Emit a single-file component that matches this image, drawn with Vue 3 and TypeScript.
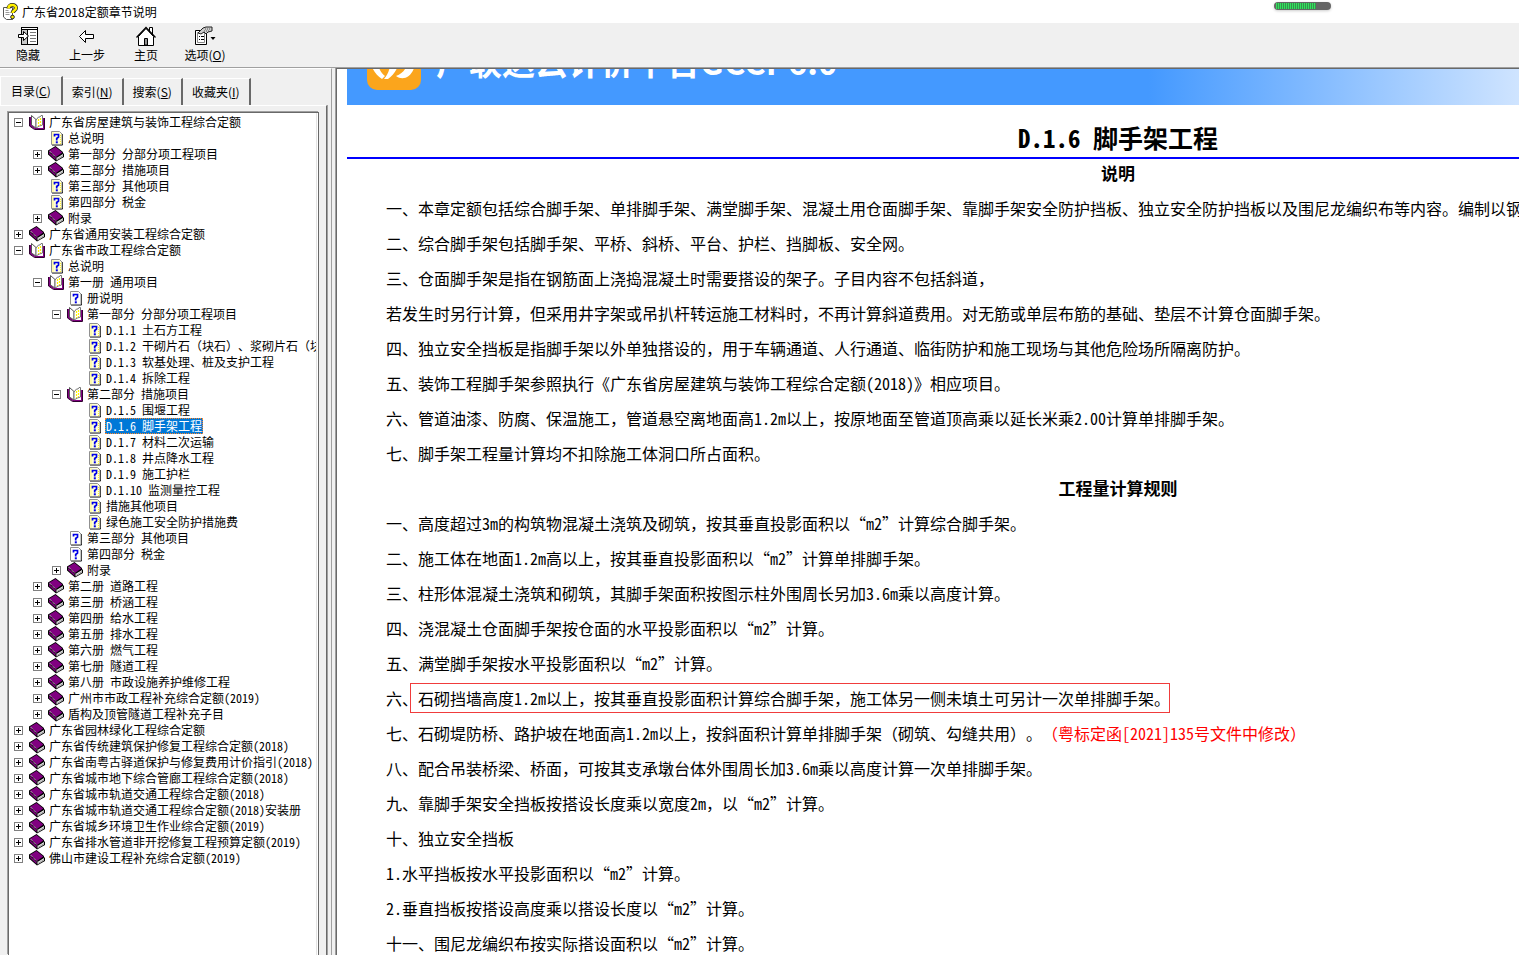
<script setup lang="ts">
import { h, ref, type FunctionalComponent } from 'vue'

type Kind = 'open' | 'book' | 'topic' | 'plain'
interface Node {
  depth: number
  kind: Kind
  label: string
}

const n = (depth: number, kind: Kind, label: string): Node => ({ depth, kind, label })

// Latin runs are set in half-width glyphs, so two of them fill one CJK cell.
const Mixed: FunctionalComponent<{ text: string }> = (props) =>
  props.text
    .split(/([\x20-\x7e]+)/)
    .filter((run) => run !== '')
    .map((run) => (/^[\x20-\x7e]/.test(run) ? h('span', { class: 'half' }, run) : run))
Mixed.props = ['text']

const nodes: Node[] = [
  n(0, 'open', '广东省房屋建筑与装饰工程综合定额'),
  n(1, 'topic', '总说明'),
  n(1, 'book', '第一部分 分部分项工程项目'),
  n(1, 'book', '第二部分 措施项目'),
  n(1, 'topic', '第三部分 其他项目'),
  n(1, 'topic', '第四部分 税金'),
  n(1, 'book', '附录'),
  n(0, 'book', '广东省通用安装工程综合定额'),
  n(0, 'open', '广东省市政工程综合定额'),
  n(1, 'topic', '总说明'),
  n(1, 'open', '第一册 通用项目'),
  n(2, 'plain', '册说明'),
  n(2, 'open', '第一部分 分部分项工程项目'),
  n(3, 'topic', 'D.1.1 土石方工程'),
  n(3, 'topic', 'D.1.2 干砌片石（块石）、浆砌片石（块'),
  n(3, 'topic', 'D.1.3 软基处理、桩及支护工程'),
  n(3, 'topic', 'D.1.4 拆除工程'),
  n(2, 'open', '第二部分 措施项目'),
  n(3, 'topic', 'D.1.5 围堰工程'),
  n(3, 'topic', 'D.1.6 脚手架工程'),
  n(3, 'topic', 'D.1.7 材料二次运输'),
  n(3, 'topic', 'D.1.8 井点降水工程'),
  n(3, 'topic', 'D.1.9 施工护栏'),
  n(3, 'topic', 'D.1.10 监测量控工程'),
  n(3, 'topic', '措施其他项目'),
  n(3, 'topic', '绿色施工安全防护措施费'),
  n(2, 'plain', '第三部分 其他项目'),
  n(2, 'plain', '第四部分 税金'),
  n(2, 'book', '附录'),
  n(1, 'book', '第二册 道路工程'),
  n(1, 'book', '第三册 桥涵工程'),
  n(1, 'book', '第四册 给水工程'),
  n(1, 'book', '第五册 排水工程'),
  n(1, 'book', '第六册 燃气工程'),
  n(1, 'book', '第七册 隧道工程'),
  n(1, 'book', '第八册 市政设施养护维修工程'),
  n(1, 'book', '广州市市政工程补充综合定额(2019)'),
  n(1, 'book', '盾构及顶管隧道工程补充子目'),
  n(0, 'book', '广东省园林绿化工程综合定额'),
  n(0, 'book', '广东省传统建筑保护修复工程综合定额(2018)'),
  n(0, 'book', '广东省南粤古驿道保护与修复费用计价指引(2018)'),
  n(0, 'book', '广东省城市地下综合管廊工程综合定额(2018)'),
  n(0, 'book', '广东省城市轨道交通工程综合定额(2018)'),
  n(0, 'book', '广东省城市轨道交通工程综合定额(2018)安装册'),
  n(0, 'book', '广东省城乡环境卫生作业综合定额(2019)'),
  n(0, 'book', '广东省排水管道非开挖修复工程预算定额(2019)'),
  n(0, 'book', '佛山市建设工程补充综合定额(2019)'),
]

const selected = ref(19)

const tabs = [
  { text: '目录', key: 'C' },
  { text: '索引', key: 'N' },
  { text: '搜索', key: 'S' },
  { text: '收藏夹', key: 'I' },
]
const activeTab = ref(0)

interface Para {
  text: string
  boxed?: string
  red?: string
}

const notes: Para[] = [
  { text: '一、本章定额包括综合脚手架、单排脚手架、满堂脚手架、混凝土用仓面脚手架、靠脚手架安全防护挡板、独立安全防护挡板以及围尼龙编织布等内容。编制以钢' },
  { text: '二、综合脚手架包括脚手架、平桥、斜桥、平台、护栏、挡脚板、安全网。' },
  { text: '三、仓面脚手架是指在钢筋面上浇捣混凝土时需要搭设的架子。子目内容不包括斜道，' },
  { text: '若发生时另行计算，但采用井字架或吊扒杆转运施工材料时，不再计算斜道费用。对无筋或单层布筋的基础、垫层不计算仓面脚手架。' },
  { text: '四、独立安全挡板是指脚手架以外单独搭设的，用于车辆通道、人行通道、临街防护和施工现场与其他危险场所隔离防护。' },
  { text: '五、装饰工程脚手架参照执行《广东省房屋建筑与装饰工程综合定额(2018)》相应项目。' },
  { text: '六、管道油漆、防腐、保温施工，管道悬空离地面高1.2m以上，按原地面至管道顶高乘以延长米乘2.00计算单排脚手架。' },
  { text: '七、脚手架工程量计算均不扣除施工体洞口所占面积。' },
]

const rules: Para[] = [
  { text: '一、高度超过3m的构筑物混凝土浇筑及砌筑，按其垂直投影面积以“m2”计算综合脚手架。' },
  { text: '二、施工体在地面1.2m高以上，按其垂直投影面积以“m2”计算单排脚手架。' },
  { text: '三、柱形体混凝土浇筑和砌筑，其脚手架面积按图示柱外围周长另加3.6m乘以高度计算。' },
  { text: '四、浇混凝土仓面脚手架按仓面的水平投影面积以“m2”计算。' },
  { text: '五、满堂脚手架按水平投影面积以“m2”计算。' },
  { text: '六、', boxed: '石砌挡墙高度1.2m以上，按其垂直投影面积计算综合脚手架，施工体另一侧未填土可另计一次单排脚手架。' },
  { text: '七、石砌堤防桥、路护坡在地面高1.2m以上，按斜面积计算单排脚手架（砌筑、勾缝共用）。', red: '（粤标定函[2021]135号文件中修改）' },
  { text: '八、配合吊装桥梁、桥面，可按其支承墩台体外围周长加3.6m乘以高度计算一次单排脚手架。' },
  { text: '九、靠脚手架安全挡板按搭设长度乘以宽度2m，以“m2”计算。' },
  { text: '十、独立安全挡板' },
  { text: '1.水平挡板按水平投影面积以“m2”计算。' },
  { text: '2.垂直挡板按搭设高度乘以搭设长度以“m2”计算。' },
  { text: '十一、围尼龙编织布按实际搭设面积以“m2”计算。' },
]
</script>

<template>
  <div class="window" lang="zh-CN">
    <header class="titlebar">
      <svg class="app-icon" viewBox="0 0 16 18" aria-hidden="true">
        <path d="M1.500 4.500h9v12H4.500L1.500 14z" fill="#fff" stroke="#555" />
        <path d="M3.500 7.500h3M3.500 9.500h4M3.500 11.500h4" stroke="#999" />
        <path d="M6.500 5.500C6.500 1 14 1 14 5c0 2.500-3.500 2.500-3.500 5" fill="none" stroke="#222" stroke-width="4" />
        <path d="M6.500 5.500C6.500 1 14 1 14 5c0 2.500-3.500 2.500-3.500 5" fill="none" stroke="#fff000" stroke-width="2.600" />
        <circle cx="10.500" cy="14" r="1.800" fill="#fff000" stroke="#222" />
      </svg>
      <span>广东省2018定额章节说明</span>
      <div class="meter" aria-hidden="true"><div class="meter-fill"></div></div>
    </header>

    <nav class="toolbar">
      <button type="button">
        <svg viewBox="0 0 22 20" shape-rendering="crispEdges" aria-hidden="true">
          <path d="M4.500 1.500h16v17h-16z" fill="#fff" stroke="#000" />
          <path d="M5 3h5v15H5z" fill="#c8c8c8" />
          <path d="M4 3.500h17M10.500 3v16" stroke="#000" />
          <path d="M13 6.500h6M13 9.500h6M13 12.500h6M13 15.500h6" stroke="#777" />
          <path d="M1.500 8.500h5v-3l5 4.500-5 4.500v-3h-5z" fill="#fff" stroke="#000" shape-rendering="auto" />
        </svg>
        <span>隐藏</span>
      </button>
      <button type="button">
        <svg viewBox="0 0 22 20" aria-hidden="true">
          <path d="M3.500 10.500l6-6v4h8v4h-8v4z" fill="#fff" stroke="#000" />
        </svg>
        <span>上一步</span>
      </button>
      <button type="button">
        <svg viewBox="0 0 22 20" aria-hidden="true">
          <path d="M14.500 1.500h3v7h-3z" fill="#fff" stroke="#000" />
          <path d="M3.500 10.500L11 2.500l7.500 8v9h-15z" fill="#fff" stroke="#000" />
          <path d="M1.500 11.500L11 1.500l9.500 10" fill="none" stroke="#000" stroke-width="1.300" />
          <path d="M9.500 12.500h3V19h-3z" fill="#909090" stroke="#000" />
        </svg>
        <span>主页</span>
      </button>
      <button type="button">
        <svg viewBox="0 0 22 20" aria-hidden="true">
          <path d="M1.500 4.500h11v14h-11z" fill="#fff" stroke="#000" />
          <path d="M3.500 6.500h7v10h-7z" fill="#fff" stroke="#888" />
          <path d="M5 10.500h1M7 10.500h3M5 13.500h1M7 13.500h3" stroke="#000" />
          <path d="M4 7l5-5 3-1h6v4l-4 1-2 2-2-2-3 2z" fill="#ccc" stroke="#222" />
          <path d="M11 3h6M10 5h5" stroke="#555" stroke-dasharray="1 1" />
          <path d="M16.500 11h5l-2.500 3z" fill="#000" />
        </svg>
        <span>选项(<u>O</u>)</span>
      </button>
    </nav>

    <div class="body">
      <aside class="side">
        <div class="tabs" role="tablist">
          <button
            v-for="(t, i) in tabs"
            :key="t.key"
            type="button"
            role="tab"
            :aria-selected="i === activeTab"
            :class="{ active: i === activeTab }"
            @click="activeTab = i"
          >{{ t.text }}(<u>{{ t.key }}</u>)</button>
        </div>
        <div class="page">
          <div class="frame">
            <ul class="tree" role="tree">
              <li
                v-for="(item, i) in nodes"
                :key="i"
                role="treeitem"
                :aria-level="item.depth + 1"
                :aria-selected="i === selected"
                :style="{ paddingLeft: item.depth * 19 + 'px' }"
                @click="selected = i"
              >
                <svg class="toggle" viewBox="0 0 9 9" shape-rendering="crispEdges" aria-hidden="true">
                  <template v-if="item.kind === 'open' || item.kind === 'book'">
                    <path d="M.5.5h8v8h-8z" fill="#fff" stroke="#808080" />
                    <path d="M2 4.500h5" stroke="#000" />
                    <path v-if="item.kind === 'book'" d="M4.500 2v5" stroke="#000" />
                  </template>
                </svg>
                <svg class="icon" viewBox="0 0 16 16" aria-hidden="true">
                  <template v-if="item.kind === 'book'">
                    <path d="M0 4.500L7.500 0 15 6v1l1 1v3l-8 4.500L0 8.500z" fill="#000" />
                    <path d="M8.500 12l6.500-4v2.500l-6.500 4z" fill="#e8e8e8" />
                    <path d="M9 13.500l6-4" stroke="#777" stroke-width=".6" />
                    <path d="M1 4.700L7.500 1l6.800 5.500L8 11z" fill="#800080" />
                    <path d="M1 6l6.500 6v2L1 8z" fill="#800080" />
                    <path d="M1.500 5l6.500 6.500" stroke="#fff" stroke-dasharray="1 1" />
                  </template>
                  <template v-else-if="item.kind === 'open'">
                    <path d="M.5 3H3v8.500L6.500 14H14V4h1.500v11H5.500L.5 12z" fill="#800080" />
                    <path d="M.5 3v9l5 3.500H15.500V4" fill="none" stroke="#300030" />
                    <path d="M2.500 1.500l4.500 4V14l-4.500-3z" fill="#fff" stroke="#555" />
                    <path d="M7 6l2.500-3h1.500l1-1.500h1.500V11l-3 1L7 14z" fill="#fff" stroke="#777" />
                    <path d="M9.500 5v7M11.500 4v7" stroke="#fff200" stroke-width="1.200" stroke-dasharray="2 1" />
                  </template>
                  <template v-else>
                    <path d="M4 15h10.500V4" fill="none" stroke="#000" />
                    <path d="M3.500 1.500h8l2.500 2.500v10.500H3.500z" :fill="item.kind === 'topic' ? '#ffffd8' : '#fffffa'" stroke="#909090" />
                    <path v-if="item.kind === 'topic'" d="M5 2.500v11M12.500 5v9" stroke="#ffee30" stroke-dasharray="1 1" />
                    <path d="M6.500 6.500V4.500h4v2.500L8.700 8.500v2" fill="none" stroke="#0000e8" stroke-width="1.700" />
                    <path d="M7.800 11.300h2v2h-2z" fill="#0000e8" />
                  </template>
                </svg>
                <span class="label" :class="{ selected: i === selected }"><Mixed :text="item.label" /></span>
              </li>
            </ul>
          </div>
        </div>
      </aside>

      <main class="content">
        <article>
          <div class="banner">
            <div class="brand">
              <svg class="logo" viewBox="0 0 54 54" aria-hidden="true">
                <rect width="54" height="54" rx="10" fill="#fba51c" />
                <path d="M4 28c2 7 6 12 11 15l3-3c-4-3-6-7-7-12zM23 22c1 8-1 15-6 21h4c6-4 11-12 12-21zM29 40c8 6 19 0 20-18h-9c1 9-3 15-11 18z" fill="#fff" />
              </svg>
              <span>广联达云计价平台GCCP6.0</span>
            </div>
          </div>
          <h1><Mixed text="D.1.6 脚手架工程" /></h1>
          <h2>说明</h2>
          <p v-for="p in notes" :key="p.text"><Mixed :text="p.text" /></p>
          <h2>工程量计算规则</h2>
          <p v-for="p in rules" :key="p.text"><Mixed :text="p.text" /><span v-if="p.boxed" class="boxed"><Mixed :text="p.boxed" /></span><span v-if="p.red" class="red"><Mixed :text="p.red" /></span></p>
        </article>
      </main>
    </div>
  </div>
</template>

<style>
body {
  overflow: hidden;
}

.half {
  font-feature-settings: "hwid";
}
</style>

<style scoped>
.window {
  display: flex;
  flex-direction: column;
  height: 100vh;
  background: #f0f0f0;
  color: #000;
  font-family: "Noto Sans CJK SC", sans-serif;
  font-size: 12px;
  text-spacing-trim: space-all;
}

button {
  padding: 0;
  border: 0;
  background: none;
  color: inherit;
  font: inherit;
}

.titlebar {
  position: relative;
  display: flex;
  align-items: center;
  gap: 4px;
  height: 23px;
  flex: none;
  padding-left: 2px;
  background: #fff;
}

.app-icon {
  width: 16px;
  height: 18px;
}

.meter {
  position: absolute;
  top: 2px;
  right: 188px;
  width: 57px;
  height: 8px;
  box-sizing: border-box;
  padding: 1px 2px;
  border-radius: 4px;
  background: #666;
  box-shadow: 0 1px 3px rgba(0, 0, 0, 0.2);
}

.meter-fill {
  width: 75%;
  height: 100%;
  background: repeating-linear-gradient(90deg, #35e060 0 1px, #35954b 1px 2px);
}

.toolbar {
  display: flex;
  gap: 3px;
  height: 44px;
  flex: none;
  border-bottom: 1px solid #a0a0a0;
}

.toolbar button {
  display: flex;
  flex-direction: column;
  align-items: center;
  width: 56px;
  padding-top: 3px;
  line-height: 18px;
  white-space: nowrap;
}

.toolbar svg {
  width: 22px;
  height: 20px;
}

.body {
  display: flex;
  flex: 1;
  min-height: 0;
}

.side {
  display: flex;
  flex-direction: column;
  width: 332px;
  flex: none;
  box-sizing: border-box;
  padding: 7px 4px 0 0;
  border-top: 1px solid #fff;
  border-right: 1px solid #a0a0a0;
}

.tabs {
  display: flex;
  align-items: flex-end;
  height: 29px;
  flex: none;
}

.tabs button {
  height: 27px;
  box-sizing: border-box;
  padding: 0 9px;
  border-top: 1px solid #fff;
  border-right: 2px solid #696969;
  line-height: 26px;
}

.tabs button.active {
  height: 29px;
  padding: 0 10px;
  border-left: 1px solid #fff;
}

.page {
  display: flex;
  flex: 1;
  min-height: 0;
  padding: 6px 7px 0 8px;
  border-top: 1px solid #fff;
  border-right: 1px solid #696969;
  box-shadow: 1px 0 0 #a0a0a0;
}

.frame {
  display: flex;
  flex: 1;
  min-width: 0;
  padding-right: 1px;
  border: 1px solid #696969;
  border-bottom: 0;
  background: #fff;
  box-shadow: -1px -1px 0 #a0a0a0;
}

.tree {
  flex: 1;
  min-width: 0;
  margin: 0;
  padding: 1px 0 0 5px;
  overflow: hidden;
  border-right: 1px solid #e3e3e3;
  list-style: none;
}

.tree li {
  display: flex;
  align-items: center;
  height: 16px;
  line-height: 16px;
  white-space: nowrap;
}

.toggle {
  width: 9px;
  height: 9px;
  flex: none;
}

.icon {
  width: 16px;
  height: 16px;
  flex: none;
  margin: 0 3px 0 6px;
}

.label {
  height: 16px;
  box-sizing: border-box;
  padding: 0 1px;
}

.label.selected {
  outline: 1px dotted #ff8728;
  outline-offset: -1px;
  background: #0078d7;
  color: #fff;
}

.content {
  flex: 1;
  min-width: 0;
  margin-left: 4px;
  padding-left: 10px;
  overflow: hidden;
  border-top: 1px solid #696969;
  border-left: 1px solid #696969;
  background: #fff;
  box-shadow: -1px 0 0 #a0a0a0;
}

article {
  min-width: 1542px;
  font-size: 16px;
}

.banner {
  display: flex;
  align-items: flex-end;
  height: 36px;
  overflow: hidden;
  padding: 0 20px;
  background: linear-gradient(90deg, #4499ff 52%, #cfe4ff 76%, #fff);
}

.brand {
  display: flex;
  align-items: flex-start;
  gap: 15px;
  padding-bottom: 15px;
  color: #fff;
  font-size: 33px;
  font-weight: 700;
  line-height: 50px;
  white-space: nowrap;
}

.logo {
  width: 54px;
  height: 54px;
}

h1 {
  margin: 0;
  padding: 14px 0 2px;
  border-bottom: 2px solid #00f;
  font-size: 25px;
  font-weight: 700;
  line-height: 36px;
  text-align: center;
}

h2 {
  margin: 0;
  padding-bottom: 2px;
  font-size: 17px;
  font-weight: 700;
  line-height: 33px;
  text-align: center;
}

h1 + h2 {
  padding-bottom: 5px;
  line-height: 27px;
}

p {
  margin: 0;
  padding-left: 39px;
  line-height: 35px;
  white-space: nowrap;
}

.boxed {
  position: relative;
}

.boxed::after {
  position: absolute;
  inset: -3px 0 -3px -8px;
  border: 1px solid #f03c3c;
  content: "";
}

.red {
  color: #f00;
}
</style>
